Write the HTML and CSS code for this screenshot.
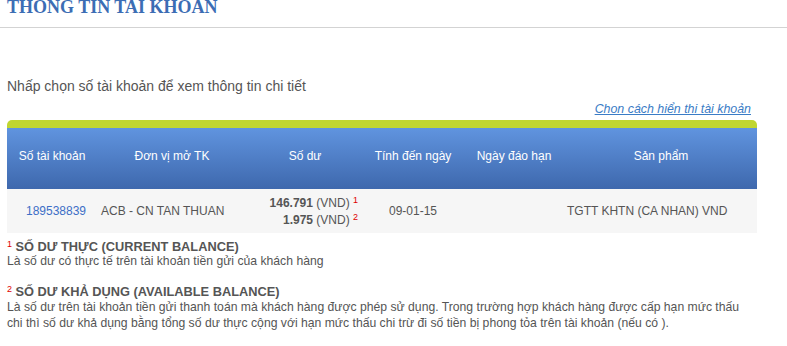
FILE: index.html
```html
<!DOCTYPE html>
<html lang="vi">
<head>
    <meta charset="UTF-8">
    <meta name="viewport" content="width=device-width, initial-scale=1.0">
    <title>Thông tin tài khoản</title>
    <link rel="stylesheet" href="styles.css">
</head>
<body>
    <h1 class="page-title">THONG TIN TAI KHOAN</h1>

    <div class="content">
        <p class="hint">Nhấp chọn số tài khoản để xem thông tin chi tiết</p>
        <div class="view-option">
            <a href="#">Chon cách hiển thi tài khoản</a>
        </div>

        <div class="accounts">
            <table>
                <colgroup>
                    <col class="c-no">
                    <col class="c-branch">
                    <col class="c-balance">
                    <col class="c-date">
                    <col class="c-due">
                    <col class="c-product">
                </colgroup>
                <thead>
                    <tr>
                        <th>Số tài khoản</th>
                        <th>Đơn vị mở TK</th>
                        <th>Số dư</th>
                        <th>Tính đến ngày</th>
                        <th>Ngày đáo hạn</th>
                        <th>Sản phẩm</th>
                    </tr>
                </thead>
                <tbody>
                    <tr>
                        <td class="acc-no"><a href="#">189538839</a></td>
                        <td class="branch">ACB - CN TAN THUAN</td>
                        <td class="balance">
                            <b>146.791</b> (VND) <sup>1</sup><br>
                            <b>1.975</b> (VND) <sup>2</sup>
                        </td>
                        <td class="date">09-01-15</td>
                        <td class="date"></td>
                        <td class="product">TGTT KHTN (CA NHAN) VND</td>
                    </tr>
                </tbody>
            </table>
        </div>

        <h3 class="note-title first"><sup>1</sup> SỐ DƯ THỰC (CURRENT BALANCE)</h3>
        <p class="note">Là số dư có thực tế trên tài khoản tiền gửi của khách hàng</p>

        <h3 class="note-title"><sup>2</sup> SỐ DƯ KHẢ DỤNG (AVAILABLE BALANCE)</h3>
        <p class="note long">Là số dư trên tài khoản tiền gửi thanh toán mà khách hàng được phép sử dụng. Trong trường hợp khách hàng được cấp hạn mức thấu chi thì số dư khả dụng bằng tổng số dư thực cộng với hạn mức thấu chi trừ đi số tiền bị phong tỏa trên tài khoản (nếu có ).</p>
    </div>
</body>
</html>
```

FILE: styles.css
```css
body {
    margin: 0;
    font-family: "Liberation Sans", Arial, sans-serif;
    font-size: 12px;
    color: #555;
    background: #fff;
}
.page-title {
    margin: 0;
    padding: 0 0 12px 7px;
    font: bold 18px/15px "Liberation Serif", "Times New Roman", serif;
    color: #3c6db4;
    border-bottom: 1px solid #d3d3d3;
}
.content {
    width: 750px;
    padding-left: 7px;
}
.hint {
    margin: 50px 0 0;
    font-size: 14px;
    line-height: 16px;
}
.view-option {
    margin-top: 8px;
    padding-right: 6px;
    text-align: right;
    font-size: 12.4px;
    line-height: 14px;
}
.view-option a {
    color: #3a7cc6;
    font-style: italic;
}
.accounts {
    margin-top: 4px;
    border-top: 8px solid #c0d631;
    border-radius: 5px 5px 0 0;
    overflow: hidden;
}
table {
    width: 750px;
    table-layout: fixed;
    border-collapse: collapse;
}
.c-no { width: 90px; }
.c-branch { width: 150px; }
.c-balance { width: 116px; }
.c-date { width: 100px; }
.c-due { width: 102px; }
.c-product { width: 192px; }
thead tr {
    height: 61px;
    background: linear-gradient(#6094df, #3e68ad);
}
th {
    padding: 0 0 5px;
    font-weight: normal;
    color: #fff;
    line-height: 14px;
    vertical-align: middle;
}
tbody tr {
    height: 44px;
    background: #f6f6f6;
}
td {
    padding: 0;
    line-height: 14px;
    vertical-align: middle;
}
.acc-no {
    padding-left: 8px;
    text-align: center;
}
.acc-no a {
    color: #3d6fc6;
    text-decoration: none;
}
.branch {
    padding-left: 4px;
}
.balance {
    padding: 2px 5px 0 0;
    text-align: right;
    line-height: 17px;
}
.balance sup,
.note-title sup {
    color: #e00000;
    font-size: 9px;
    font-weight: normal;
    line-height: 0;
    vertical-align: 4px;
}
.date {
    text-align: center;
}
.product {
    padding-left: 2px;
}
.note-title {
    margin: 16px 0 0;
    font-size: 12.8px;
    line-height: 14px;
}
.note-title.first {
    margin-top: 7px;
}
.note {
    margin: 0;
    font-size: 12.2px;
    line-height: 15px;
}
.note.long {
    line-height: 16px;
}
```
